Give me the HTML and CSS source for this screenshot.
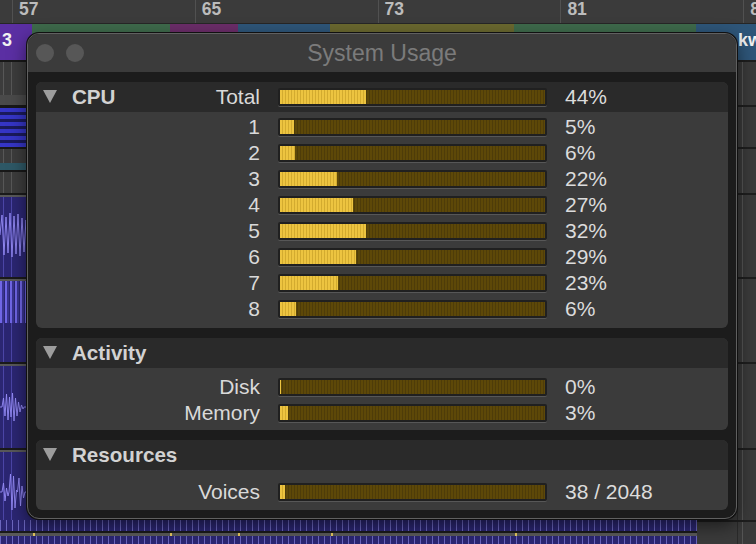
FILE: index.html
```html
<!DOCTYPE html>
<html>
<head>
<meta charset="utf-8">
<link rel="stylesheet" href="styles.css">
</head>
<body>
<div class="daw">
  <div class="ruler">
    <div class="bar-cell">57</div>
    <div class="bar-cell">65</div>
    <div class="bar-cell">73</div>
    <div class="bar-cell">81</div>
    <div class="bar-cell">89</div>
  </div>
  <div class="clips">
    <div class="clip c-purple">3</div>
    <div class="clip c-green w138"></div>
    <div class="clip c-magenta w68"></div>
    <div class="clip c-blue w92"></div>
    <div class="clip c-olive w184"></div>
    <div class="clip c-green w182"></div>
    <div class="clip c-blue grow kw">kw</div>
  </div>
  <div class="tracks">
    <div class="track h45"><div class="lane gray band"></div><div class="empty"></div></div>
    <div class="track h42"><div class="lane midi"></div><div class="empty"></div></div>
    <div class="track h46"><div class="lane gray teal"></div><div class="empty"></div></div>
    <div class="track h84">
      <div class="lane purple">
        <svg class="wave" width="27" height="84" viewBox="0 0 27 84"><path d="M0 40 L2 20 L4 60 L6 22 L8 58 L10 18 L12 62 L14 21 L16 59 L18 19 L20 61 L22 23 L24 57 L26 25 L27 40"/></svg>
      </div>
      <div class="empty"></div>
    </div>
    <div class="track h85"><div class="lane purple"><div class="dense"></div></div><div class="empty"></div></div>
    <div class="track h86">
      <div class="lane purple">
        <svg class="wave" width="27" height="86" viewBox="0 0 27 86"><path d="M0 43 L2 43 L3.5 34 L5 52 L6.5 30 L8 56 L9.5 33 L11 53 L12.5 29 L14 57 L15.5 34 L17 52 L18.5 38 L20 48 L21.5 41 L23 45 L24 43 L27 43"/></svg>
      </div>
      <div class="empty"></div>
    </div>
    <div class="track h72">
      <div class="lane purple">
        <svg class="wave" width="27" height="72" viewBox="0 0 27 72"><path d="M0 42 L2 42 L3.5 33 L5 51 L6.5 38 L8 46 L9 42 L10.5 24 L12 60 L13.5 26 L15 58 L16.5 40 L17.5 42 L19 28 L20.5 56 L22 36 L23.5 48 L25 42 L27 42"/></svg>
      </div>
      <div class="empty"></div>
    </div>
    <div class="track h24">
      <div class="lane ticks">
        <div class="timeline">
          <span class="mark m1"></span><span class="mark m2"></span><span class="mark m3"></span><span class="mark m4"></span><span class="mark m5"></span>
        </div>
      </div>
      <div class="empty"></div>
    </div>
  </div>

  <div class="window">
    <div class="titlebar">
      <div class="lights"><span class="light"></span><span class="light"></span></div>
      <div class="wtitle">System Usage</div>
    </div>
    <div class="wbody">
      <section class="panel">
        <div class="row head">
          <div class="label"><span class="tri"></span><span class="title">CPU</span><span class="name">Total</span></div>
          <div class="bar"><div class="fill" style="width:86px"></div></div>
          <div class="val">44%</div>
        </div>
        <div class="pbody pb-cpu">
          <div class="row"><div class="label">1</div><div class="bar"><div class="fill" style="width:14px"></div></div><div class="val">5%</div></div>
          <div class="row"><div class="label">2</div><div class="bar"><div class="fill" style="width:15px"></div></div><div class="val">6%</div></div>
          <div class="row"><div class="label">3</div><div class="bar"><div class="fill" style="width:57px"></div></div><div class="val">22%</div></div>
          <div class="row"><div class="label">4</div><div class="bar"><div class="fill" style="width:73px"></div></div><div class="val">27%</div></div>
          <div class="row"><div class="label">5</div><div class="bar"><div class="fill" style="width:86px"></div></div><div class="val">32%</div></div>
          <div class="row"><div class="label">6</div><div class="bar"><div class="fill" style="width:76px"></div></div><div class="val">29%</div></div>
          <div class="row"><div class="label">7</div><div class="bar"><div class="fill" style="width:58px"></div></div><div class="val">23%</div></div>
          <div class="row"><div class="label">8</div><div class="bar"><div class="fill" style="width:16px"></div></div><div class="val">6%</div></div>
        </div>
      </section>
      <section class="panel">
        <div class="row head">
          <div class="label"><span class="tri"></span><span class="title">Activity</span></div>
        </div>
        <div class="pbody pb-act">
          <div class="row"><div class="label">Disk</div><div class="bar"><div class="fill" style="width:1px"></div></div><div class="val">0%</div></div>
          <div class="row"><div class="label">Memory</div><div class="bar"><div class="fill" style="width:8px"></div></div><div class="val">3%</div></div>
        </div>
      </section>
      <section class="panel">
        <div class="row head">
          <div class="label"><span class="tri"></span><span class="title">Resources</span></div>
        </div>
        <div class="pbody pb-res">
          <div class="row"><div class="label">Voices</div><div class="bar"><div class="fill" style="width:5px"></div></div><div class="val">38 / 2048</div></div>
        </div>
      </section>
    </div>
  </div>
</div>
</body>
</html>
```

FILE: styles.css
```css
* { box-sizing: border-box; }
html, body { margin: 0; padding: 0; }
body {
  width: 756px;
  height: 544px;
  overflow: hidden;
  background: #3a3a3a;
  font-family: "Liberation Sans", Arial, Helvetica, sans-serif;
}
.daw {
  position: relative;
  width: 756px;
  height: 544px;
  overflow: hidden;
}

/* ruler */
.ruler {
  display: flex;
  height: 24px;
  padding-left: 12px;
  background: #3b3b3b;
  border-bottom: 1px solid #262626;
}
.bar-cell {
  flex: 0 0 182.8px;
  border-left: 1px solid #515151;
  padding-left: 6px;
  font-weight: bold;
  font-size: 17.5px;
  line-height: 18px;
  color: #bcbcbc;
}

/* clip headers */
.clips {
  display: flex;
  height: 36px;
}
.clip {
  flex: 0 0 auto;
  color: #f2f2f2;
  font-weight: bold;
  font-size: 18px;
  line-height: 32px;
  padding-left: 2px;
  white-space: nowrap;
  overflow: hidden;
}
.c-purple { width: 32px; background: #5b2fa3; }
.c-green { background: #3e6a4b; }
.c-magenta { background: #6b2d69; }
.c-blue { background: #2e5679; }
.c-olive { background: #6a682f; }
.w138 { width: 138px; }
.w68 { width: 68px; }
.w92 { width: 92px; }
.w184 { width: 184px; }
.w182 { width: 182px; }
.grow { flex: 1 1 auto; }
.kw { padding-left: 42px; }

/* tracks */
.tracks { display: flex; flex-direction: column; }
.track { display: flex; flex: 0 0 auto; }
.h45 { height: 45px; }
.h42 { height: 42px; }
.h46 { height: 46px; }
.h84 { height: 84px; }
.h85 { height: 85px; }
.h86 { height: 86px; }
.h72 { height: 72px; }
.h24 { height: 24px; }

.lane {
  width: 697px;
  flex: 0 0 697px;
  border-top: 2px solid #181818;
}
.empty {
  flex: 1 1 auto;
  border-top: 2px solid #1e1e1e;
  background:
    linear-gradient(90deg, transparent 40px, #2a2a2a 40px 41px, transparent 41px 45px, #555 45px 46px, transparent 46px),
    #3a3a3a;
}
.gray {
  background:
    linear-gradient(90deg, transparent 3px, #575757 3px 4px, transparent 4px 11px, #575757 11px 12px, transparent 12px),
    #3c3c3c;
}
.band { box-shadow: inset 0 -10px 0 #4a4a4a; }
.midi {
  border-top-width: 3px;
  background:
    repeating-linear-gradient(180deg, #3535c6 0 4px, #1a1a5c 4px 7px);
}
.teal {
  background:
    linear-gradient(180deg, transparent 14px, #2e5866 14px 21px, #181818 21px 23px, transparent 23px),
    linear-gradient(90deg, transparent 3px, #575757 3px 4px, transparent 4px 11px, #575757 11px 12px, transparent 12px),
    #3c3c3c;
}
.purple {
  border-top: 2px solid #1a1a1a;
  background:
    linear-gradient(180deg, #585858 0 2px, transparent 2px),
    linear-gradient(90deg, transparent 3px, #4b45a6 3px 4px, transparent 4px 11px, #4b45a6 11px 12px, transparent 12px),
    #2b2672;
}
.wave { display: block; }
.wave path { fill: none; stroke: #968cf7; stroke-width: 0.9; }
.dense {
  width: 27px;
  height: 42px;
  margin-top: 2px;
  background: repeating-linear-gradient(90deg, #7066e6 0 2px, #3a3490 2px 4px, transparent 4px 5px);
}
.ticks {
  border-top: 0;
  background:
    repeating-linear-gradient(90deg, #6b66be 0 1px, transparent 1px 6px),
    #2b2672;
  padding-top: 11px;
}
.timeline {
  display: flex;
  height: 5px;
  border-top: 2px solid #1a1a1a;
  background: #5a5a5a;
}
.mark {
  width: 2px;
  height: 3px;
  background: #e6c860;
}
.m1 { margin-left: 33px; }
.m2 { margin-left: 135px; }
.m3 { margin-left: 66px; }
.m4 { margin-left: 91px; }
.m5 { margin-left: 182px; }

/* window */
.window {
  position: absolute;
  left: 27px;
  top: 33px;
  width: 710px;
  height: 486px;
  border-radius: 12px;
  border: 1px solid #606060;
  background: #1c1c1c;
  box-shadow: 0 0 0 1px #101010, 0 6px 18px rgba(0,0,0,0.55);
  overflow: hidden;
  display: flex;
  flex-direction: column;
}
.titlebar {
  position: relative;
  height: 38px;
  flex: 0 0 38px;
  background: #3b3b3b;
  display: flex;
  align-items: center;
  justify-content: center;
}
.lights {
  position: absolute;
  left: 8px;
  top: 10px;
  display: flex;
  gap: 12px;
}
.light {
  width: 18px;
  height: 18px;
  border-radius: 50%;
  background: #575757;
}
.wtitle {
  font-size: 23px;
  color: #7b7b7b;
  margin-left: 0;
}
.wbody {
  padding: 10px 8px 8px 8px;
  display: flex;
  flex-direction: column;
  gap: 10px;
}
.panel {
  border-radius: 6px;
  overflow: hidden;
  background: #3b3b3b;
}
.row {
  display: grid;
  grid-template-columns: 224px 269px 1fr;
  column-gap: 18px;
  align-items: center;
  height: 26px;
  font-size: 21px;
  color: #d9d9d9;
}
.row.head {
  height: 30px;
  background: #2a2a2a;
}
.label {
  text-align: right;
  white-space: nowrap;
}
.head .label {
  display: flex;
  align-items: center;
  padding-left: 7px;
}
.tri {
  width: 0;
  height: 0;
  border-left: 7.5px solid transparent;
  border-right: 7.5px solid transparent;
  border-top: 13px solid #9d9d9d;
  margin-top: -2px;
}
.title {
  font-weight: bold;
  font-size: 20.6px;
  margin-left: 15px;
  color: #d2d2d2;
}
.name { margin-left: auto; }
.val { color: #dcdcdc; white-space: nowrap; }
.bar {
  height: 18px;
  border: 2px solid #202020;
  border-radius: 2px;
  box-shadow: 0 1px 0 #575757;
  background: repeating-linear-gradient(90deg, #5d4808 0 2px, #4e3c09 2px 3px);
  overflow: hidden;
}
.fill {
  height: 100%;
  background: repeating-linear-gradient(90deg, #edc440 0 2px, #d3ab2f 2px 3px);
}
.pb-cpu { padding: 2px 0 6px; }
.pb-act { padding: 6px 0 4px; }
.pb-res { padding: 9px 0 5px; }
```
